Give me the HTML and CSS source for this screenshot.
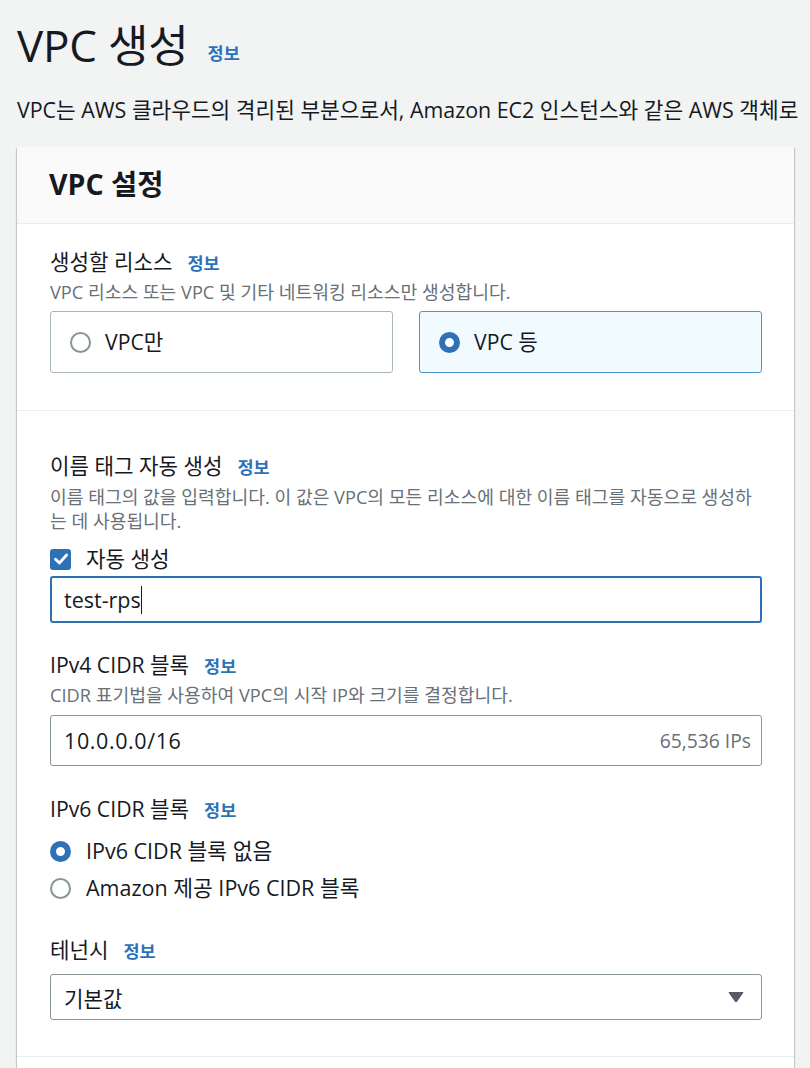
FILE: index.html
```html
<!DOCTYPE html>
<html lang="ko">
<head>
<meta charset="utf-8">
<title>VPC 생성</title>
<link rel="stylesheet" href="styles.css">
</head>
<body>
<div class="page">
  <div class="title-row">
    <h1 class="title">VPC 생성</h1>
    <a class="info info-title">정보</a>
  </div>
  <p class="lead">VPC는 AWS 클라우드의 격리된 부분으로서, Amazon EC2 인스턴스와 같은 AWS 객체로</p>

  <div class="card">
    <div class="card-header">
      <h2 class="card-title">VPC 설정</h2>
    </div>

    <div class="section section-first">
      <div class="label">생성할 리소스 <a class="info">정보</a></div>
      <div class="desc">VPC 리소스 또는 VPC 및 기타 네트워킹 리소스만 생성합니다.</div>
      <div class="tiles">
        <div class="tile">
          <span class="radio"></span>
          <span class="tile-text">VPC만</span>
        </div>
        <div class="tile tile-selected">
          <span class="radio radio-on"></span>
          <span class="tile-text">VPC 등</span>
        </div>
      </div>
    </div>

    <div class="section section-form">
      <div class="field">
        <div class="label">이름 태그 자동 생성 <a class="info">정보</a></div>
        <div class="desc desc-multi">이름 태그의 값을 입력합니다. 이 값은 VPC의 모든 리소스에 대한 이름 태그를 자동으로 생성하<br>는 데 사용됩니다.</div>
        <div class="check-row">
          <span class="checkbox">
            <svg viewBox="0 0 20 20" width="20" height="20"><path d="M4.5 10.2 L8.4 14 L15.6 6" fill="none" stroke="#fff" stroke-width="2.8" stroke-linecap="round" stroke-linejoin="round"/></svg>
          </span>
          <span class="check-text">자동 생성</span>
        </div>
        <div class="input input-focus"><span class="value">test-rps</span><span class="caret"></span></div>
      </div>

      <div class="field field-ipv4">
        <div class="label">IPv4 CIDR 블록 <a class="info">정보</a></div>
        <div class="desc">CIDR 표기법을 사용하여 VPC의 시작 IP와 크기를 결정합니다.</div>
        <div class="input input-cidr"><span class="value">10.0.0.0/16</span><span class="suffix">65,536 IPs</span></div>
      </div>

      <div class="field field-ipv6">
        <div class="label">IPv6 CIDR 블록 <a class="info">정보</a></div>
        <div class="radio-group">
          <div class="radio-row"><span class="radio radio-on"></span><span class="radio-text">IPv6 CIDR 블록 없음</span></div>
          <div class="radio-row"><span class="radio"></span><span class="radio-text">Amazon 제공 IPv6 CIDR 블록</span></div>
        </div>
      </div>

      <div class="field field-tenancy">
        <div class="label">테넌시 <a class="info">정보</a></div>
        <div class="select">
          <span class="value">기본값</span>
          <svg class="caret-down" viewBox="0 0 16 12" width="16" height="12"><path d="M1 1.5 H15 L8.6 10.6 Q8 11.4 7.4 10.6 Z" fill="#545b64" stroke="#545b64" stroke-width="1" stroke-linejoin="round"/></svg>
        </div>
      </div>
    </div>

    <div class="section section-next"></div>
  </div>
</div>
</body>
</html>
```

FILE: styles.css
```css
* { box-sizing: border-box; }

html, body {
  margin: 0;
  padding: 0;
  background: #f2f3f3;
}

body {
  font-family: "Open Sans", "Noto Sans CJK KR", sans-serif;
  color: #16191f;
  width: 810px;
  height: 1068px;
  overflow: hidden;
}

.page {
  padding: 19px 0 0 17px;
}

.title-row {
  display: flex;
  align-items: baseline;
  gap: 19px;
  height: 52px;
}

.title {
  margin: 0;
  font-size: 44px;
  font-weight: 400;
  line-height: 52px;
  letter-spacing: -0.2px;
}

.info {
  color: #2f71b7;
  font-weight: 700;
  font-size: 17.5px;
  text-decoration: none;
  cursor: pointer;
}

.info-title {
  position: relative;
  top: -2px;
}

.lead {
  margin: 25px 0 0 0;
  font-size: 21.4px;
  line-height: 28px;
  height: 28px;
  white-space: nowrap;
}

.card {
  margin-top: 23px;
  width: 777px;
  background: #fff;
  box-shadow: 0 1px 1px 0 rgba(0, 28, 36, 0.3), 1px 1px 1px 0 rgba(0, 28, 36, 0.15), -1px 1px 1px 0 rgba(0, 28, 36, 0.15);
}

.card-header {
  background: #fafafa;
  border-bottom: 1px solid #eaeded;
  height: 77px;
  padding: 20px 32px 0 32px;
}

.card-title {
  margin: 0;
  font-size: 28.5px;
  font-weight: 700;
  line-height: 34px;
}

.section {
  padding: 0 32px 0 33px;
  border-bottom: 1px solid #eaeded;
}

.section-first {
  padding-top: 24px;
  padding-bottom: 37px;
}

.section-form {
  padding-top: 41px;
  padding-bottom: 36px;
}

.section-next {
  border-bottom: none;
  height: 40px;
}

.label {
  font-size: 21.2px;
  line-height: 28px;
  height: 28px;
  display: flex;
  align-items: baseline;
}

.label .info {
  margin-left: 15px;
}

.desc {
  margin-top: 4px;
  font-size: 18.2px;
  line-height: 24px;
  color: #687078;
  white-space: nowrap;
}

.desc-multi {
  margin-top: 5px;
  height: 48px;
}

.tiles {
  margin-top: 7px;
  display: grid;
  grid-template-columns: 1fr 1fr;
  gap: 26px;
}

.tile {
  height: 62px;
  border: 1px solid #aab7b8;
  border-radius: 3px;
  display: flex;
  align-items: center;
  padding-left: 19px;
  gap: 14px;
  background: #fff;
}

.tile-selected {
  background: #f1faff;
  border-color: #4a98cf;
}

.tile-text {
  font-size: 21.2px;
  line-height: 28px;
}

.radio {
  flex: none;
  width: 21px;
  height: 21px;
  border-radius: 50%;
  border: 2px solid #879596;
  background: #fff;
}

.radio-on {
  border: 6.5px solid #2f71b7;
  background: #fff;
}

.check-row {
  margin-top: 12px;
  display: flex;
  align-items: center;
  gap: 15px;
  height: 28px;
}

.checkbox {
  flex: none;
  width: 21px;
  height: 21px;
  border-radius: 3px;
  background: #2f71b7;
  display: flex;
  align-items: center;
  justify-content: center;
}

.check-text {
  font-size: 21.2px;
  line-height: 28px;
}

.input {
  display: flex;
  align-items: center;
  border: 1px solid #879596;
  border-radius: 3px;
  padding: 0 10px 0 13px;
  background: #fff;
}

.input .value {
  font-size: 21.5px;
}

.input-focus {
  margin-top: 3px;
  height: 47px;
  border: 2px solid #2f71b7;
  padding-left: 12px;
}

.caret {
  display: inline-block;
  width: 1.5px;
  height: 28px;
  background: #16191f;
}

.field-ipv4 {
  margin-top: 28px;
}

.input-cidr {
  margin-top: 8px;
  height: 51px;
  justify-content: space-between;
}

.input-cidr .value {
  letter-spacing: 0.6px;
}

.suffix {
  color: #687078;
  font-size: 19.3px;
}

.field-ipv6 {
  margin-top: 29px;
}

.radio-group {
  margin-top: 13px;
  display: flex;
  flex-direction: column;
  gap: 7px;
}

.radio-row {
  display: flex;
  align-items: center;
  gap: 15px;
  height: 30px;
}

.radio-text {
  font-size: 21.5px;
  line-height: 30px;
}

.field-tenancy {
  margin-top: 33px;
}

.select {
  margin-top: 10px;
  height: 46px;
  border: 1px solid #879596;
  border-radius: 3px;
  display: flex;
  align-items: center;
  justify-content: space-between;
  padding: 0 17px 0 13px;
}

.select .value {
  font-size: 21.2px;
}

.caret-down {
  display: block;
}
```
